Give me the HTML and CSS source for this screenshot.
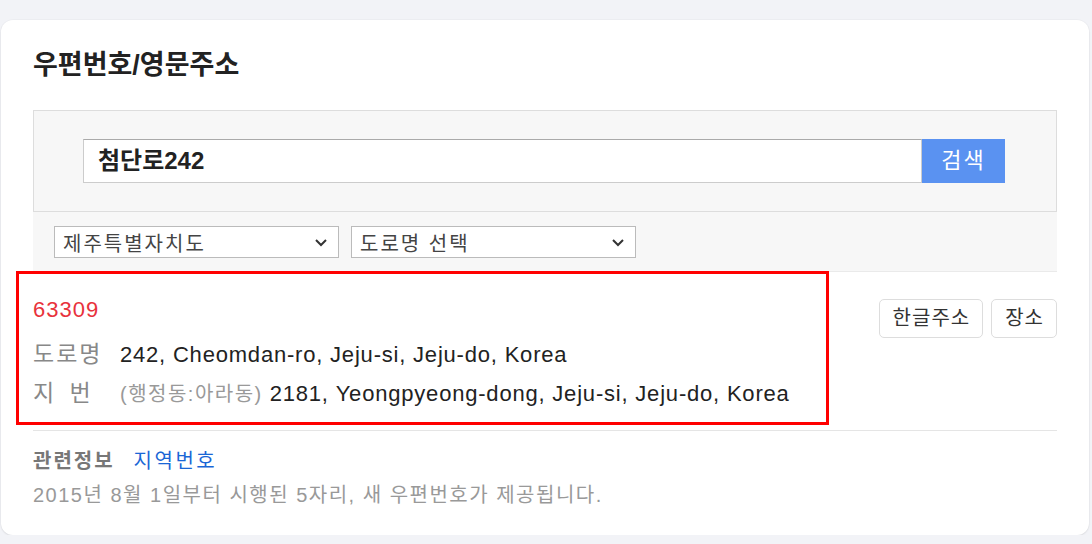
FILE: index.html
```html
<!DOCTYPE html>
<html lang="ko">
<head>
<meta charset="utf-8">
<title>우편번호/영문주소</title>
<link rel="stylesheet" href="styles.css">
</head>
<body>
<div class="card">
  <h2 class="title">우편번호/영문주소</h2>
  <div class="search-panel">
    <div class="search-row">
      <div class="search-input">첨단로242</div>
      <div class="search-btn">검색</div>
    </div>
  </div>
  <div class="select-strip">
    <div class="select">
      <span>제주특별자치도</span>
      <svg class="chev" width="14" height="9" viewBox="0 0 14 9"><path d="M2 2 L7 7 L12 2" fill="none" stroke="#333" stroke-width="2"/></svg>
    </div>
    <div class="select">
      <span>도로명 선택</span>
      <svg class="chev" width="14" height="9" viewBox="0 0 14 9"><path d="M2 2 L7 7 L12 2" fill="none" stroke="#333" stroke-width="2"/></svg>
    </div>
  </div>
  <div class="result">
    <div class="result-info">
      <div class="zip">63309</div>
      <div class="addr-row"><span class="label">도로명</span><span class="addr">242, Cheomdan-ro, Jeju-si, Jeju-do, Korea</span></div>
      <div class="addr-row"><span class="label spaced">지 번</span><span class="addr"><span class="paren">(행정동:아라동)</span> 2181, Yeongpyeong-dong, Jeju-si, Jeju-do, Korea</span></div>
    </div>
    <div class="result-btns">
      <div class="btn">한글주소</div>
      <div class="btn">장소</div>
    </div>
    <div class="highlight"></div>
  </div>
  <div class="footer">
    <div class="related"><span class="rel-label">관련정보</span><span class="rel-link">지역번호</span></div>
    <div class="note">2015년 8월 1일부터 시행된 5자리, 새 우편번호가 제공됩니다.</div>
  </div>
</div>
</body>
</html>
```
FILE: styles.css
```css
* { box-sizing: border-box; }
html, body { margin: 0; padding: 0; }
body {
  background: #f2f3f7;
  padding: 20px 0 0 1px;
  font-family: "Liberation Sans", "Noto Sans CJK KR", sans-serif;
  color: #222;
}
.card {
  width: 1088px;
  height: 515px;
  background: #fff;
  border-radius: 12px;
  box-shadow: 0 1px 2px rgba(0,0,0,0.08), 0 0 0 1px rgba(0,0,0,0.02);
  padding: 27px 32px 0 32px;
}
.title {
  margin: 0 0 27px 0;
  font-size: 27px;
  line-height: 36px;
  font-weight: bold;
  color: #222;
}
.search-panel {
  background: #f7f7f7;
  border: 1px solid #ddd;
  height: 102px;
  padding: 28px 51px 0 49px;
}
.search-row {
  display: flex;
  height: 44px;
}
.search-input {
  flex: 1;
  background: #fff;
  border: 1px solid #ccc;
  border-top-color: #aaa;
  font-size: 24px;
  font-weight: bold;
  line-height: 42px;
  padding-left: 14px;
  color: #222;
}
.search-btn {
  width: 83px;
  background: #5a92f1;
  color: #fff;
  font-size: 22px;
  letter-spacing: 2px;
  line-height: 44px;
  text-align: center;
}
.select-strip {
  background: #f7f7f7;
  height: 60px;
  border-bottom: 1px solid #eaeaea;
  padding: 14px 0 0 21px;
  display: flex;
  gap: 12px;
}
.select {
  width: 285px;
  height: 32px;
  background: #fff;
  border: 1px solid #bbb;
  display: flex;
  align-items: center;
  justify-content: space-between;
  padding: 0 10px 0 8px;
  font-size: 20px;
  letter-spacing: 2px;
  color: #444;
}
.chev { display: block; }
.result {
  position: relative;
  display: flex;
  justify-content: space-between;
  border-bottom: 1px solid #e5e5e5;
  height: 159px;
  padding-top: 19px;
}
.zip {
  color: #e8323c;
  font-size: 22px;
  letter-spacing: 1px;
  line-height: 38px;
  margin-bottom: 6px;
}
.addr-row {
  display: flex;
  align-items: baseline;
  line-height: 38px;
}
.label {
  width: 87px;
  font-size: 23px;
  letter-spacing: 2px;
  color: #888;
  flex: none;
}
.spaced { word-spacing: 5px; }
.addr {
  font-size: 22px;
  letter-spacing: 0.8px;
  color: #222;
}
.paren {
  font-size: 20px;
  letter-spacing: 1.5px;
  color: #999;
}
.result-btns {
  display: flex;
  gap: 8px;
  margin-top: 8px;
}
.btn {
  height: 39px;
  border: 1px solid #ddd;
  border-radius: 5px;
  background: #fff;
  font-size: 20px;
  letter-spacing: 1px;
  color: #333;
  line-height: 37px;
  padding: 0 12px 0 13px;
}
.highlight {
  position: absolute;
  left: -17px;
  top: -1px;
  width: 813px;
  height: 154px;
  border: 3px solid #ff0000;
  pointer-events: none;
}
.footer {
  padding-top: 14px;
}
.related, .note {
  line-height: 32px;
}
.rel-label {
  font-size: 20px;
  font-weight: bold;
  letter-spacing: 2px;
  color: #777;
  margin-right: 19px;
}
.rel-link {
  font-size: 20px;
  letter-spacing: 2.5px;
  color: #1a66d6;
}
.note {
  font-size: 20px;
  letter-spacing: 1.5px;
  color: #999;
}
```
